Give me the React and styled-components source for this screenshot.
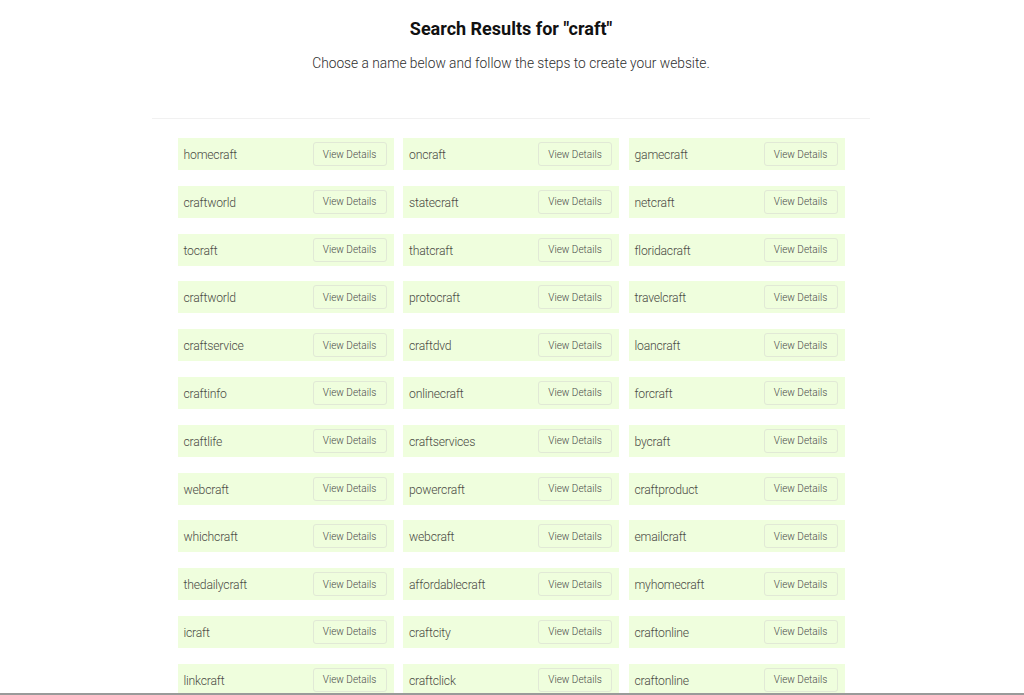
import React from 'react';
import styled, { createGlobalStyle } from 'styled-components';

const GlobalStyle = createGlobalStyle`
    html, body {
        margin: 0;
        padding: 0;
        background: #ffffff;
        font-family: Roboto, "Liberation Sans", Arial, sans-serif;
    }
`;

const Page = styled.main`
    width: 718px;
    margin: 0 auto;
    padding-top: 17px;
    position: relative;
    left: -1px;
`;

const Header = styled.header`
    text-align: center;
    padding-bottom: 45px;
    border-bottom: 1px solid #f1f1f1;
`;

const Title = styled.h1`
    margin: 0;
    font-size: 18px;
    font-weight: 700;
    line-height: 24px;
    color: #111;
`;

const Subtitle = styled.p`
    margin: 12px 0 0;
    font-size: 13.75px;
    font-weight: 300;
    line-height: 20px;
    color: #2e2e2e;
`;

const Grid = styled.section`
    display: grid;
    grid-template-columns: repeat(3, 216px);
    column-gap: 9.5px;
    row-gap: 15.8px;
    justify-content: center;
    padding-top: 19px;
`;

const Card = styled.div`
    height: 32px;
    display: flex;
    align-items: center;
    justify-content: space-between;
    padding: 0 6px;
    box-sizing: border-box;
    background: #effedd;
`;

const Name = styled.span`
    padding-top: 2px;
    font-size: 12.2px;
    font-weight: 300;
    letter-spacing: -0.2px;
    color: #4a4a44;
`;

const DetailsButton = styled.button`
    height: 24px;
    width: 74px;
    margin-right: 1px;
    padding: 0;
    border: 1px solid #e1e9d6;
    border-radius: 3px;
    background: transparent;
    font-family: inherit;
    font-size: 10px;
    font-weight: 300;
    color: #4a4a4a;
    cursor: pointer;
`;

const BottomEdge = styled.div`
    position: fixed;
    left: 0;
    right: 0;
    bottom: 0;
    height: 2px;
    background: #9a9a9a;
`;

const names = [
    'homecraft', 'oncraft', 'gamecraft',
    'craftworld', 'statecraft', 'netcraft',
    'tocraft', 'thatcraft', 'floridacraft',
    'craftworld', 'protocraft', 'travelcraft',
    'craftservice', 'craftdvd', 'loancraft',
    'craftinfo', 'onlinecraft', 'forcraft',
    'craftlife', 'craftservices', 'bycraft',
    'webcraft', 'powercraft', 'craftproduct',
    'whichcraft', 'webcraft', 'emailcraft',
    'thedailycraft', 'affordablecraft', 'myhomecraft',
    'icraft', 'craftcity', 'craftonline',
    'linkcraft', 'craftclick', 'craftonline',
    'craftmarket', 'craftnet', 'crafthome',
];

const App = () => (
    <>
        <GlobalStyle />
        <Page>
            <Header>
                <Title>Search Results for &quot;craft&quot;</Title>
                <Subtitle>Choose a name below and follow the steps to create your website.</Subtitle>
            </Header>
            <Grid>
                {names.map((name, i) => (
                    <Card key={`${name}-${i}`}>
                        <Name>{name}</Name>
                        <DetailsButton type="button">View Details</DetailsButton>
                    </Card>
                ))}
            </Grid>
        </Page>
        <BottomEdge />
    </>
);

export default App;
